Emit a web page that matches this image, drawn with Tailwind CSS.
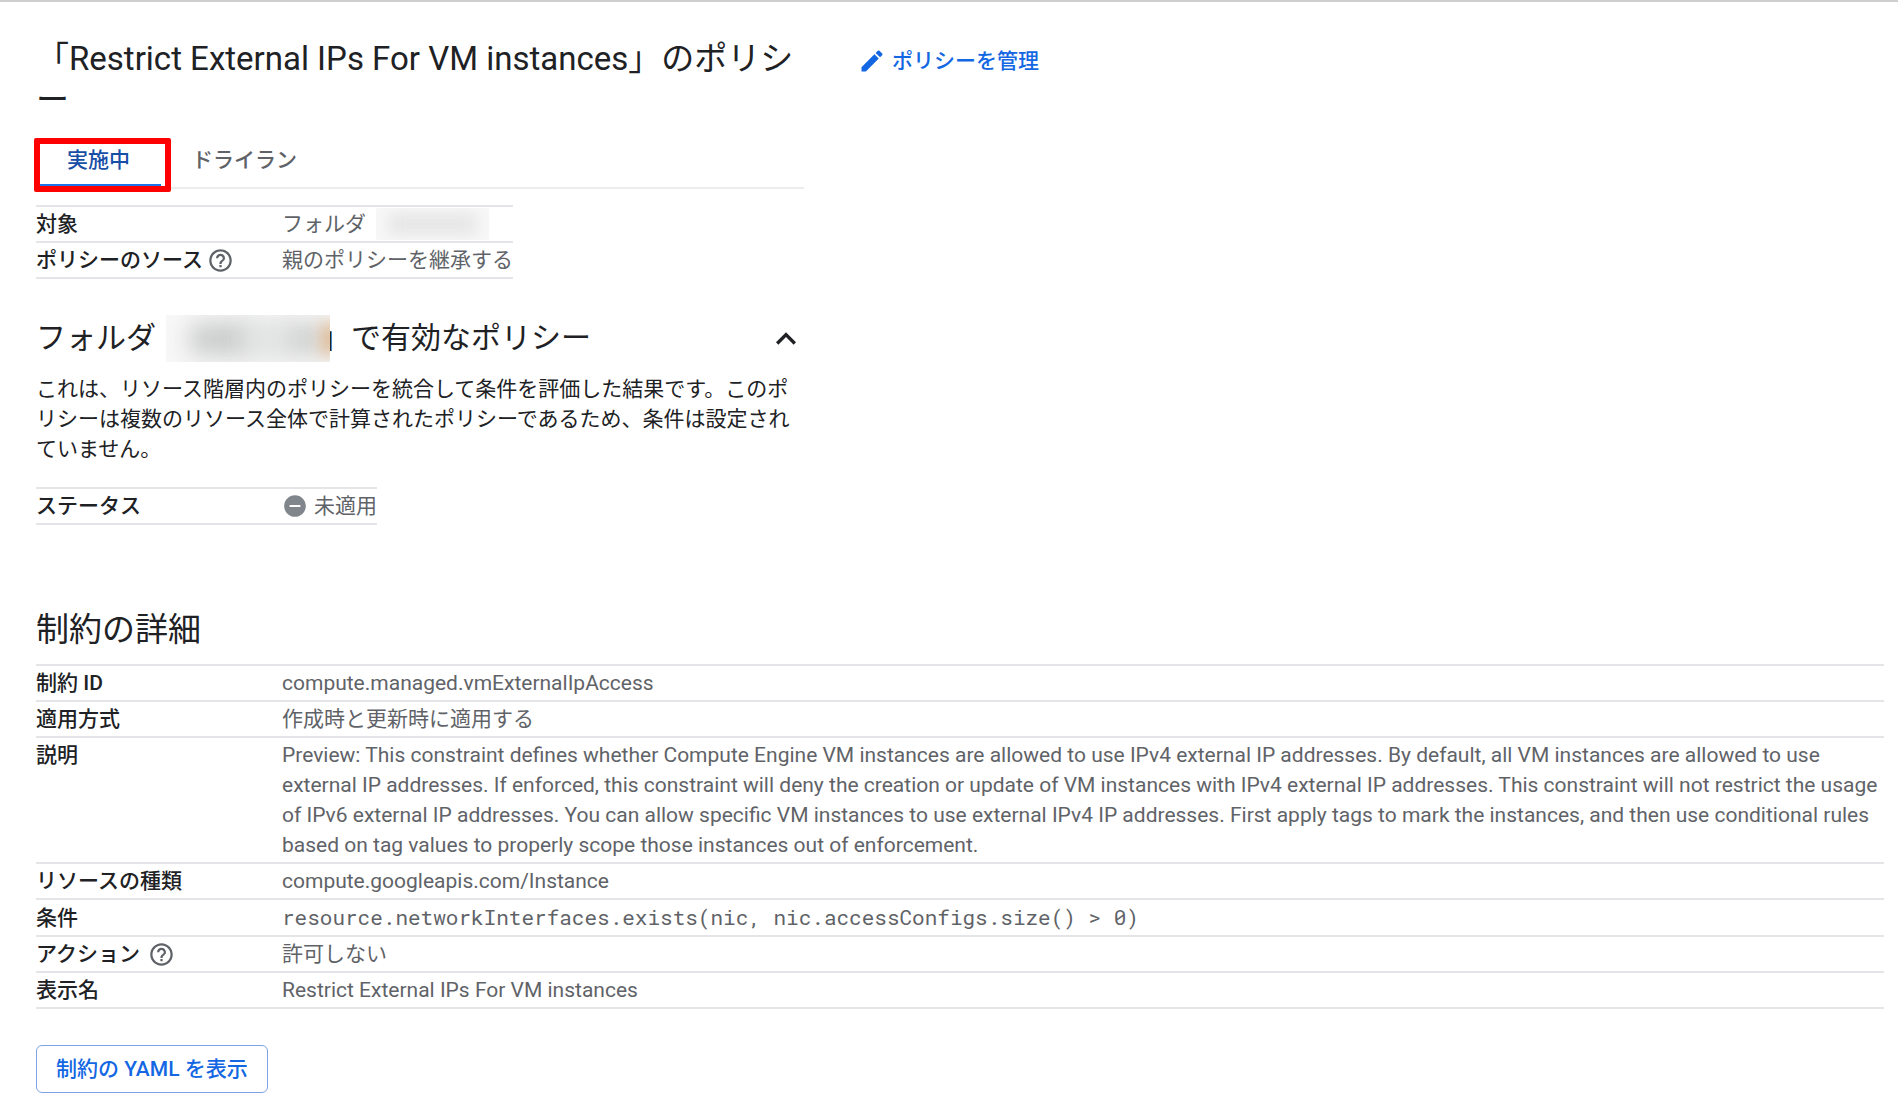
<!DOCTYPE html>
<html lang="ja">
<head>
    <meta charset="UTF-8">
    <title>Restrict External IPs For VM instances - ポリシー</title>
    <script src="https://cdn.jsdelivr.net/npm/@tailwindcss/browser@4"></script>
</head>
<body class="bg-white font-[Roboto,'Noto_Sans_CJK_JP',sans-serif] text-[21px] leading-[30px] text-[#202124]">
<main class="border-t-2 border-[#cfcfcf] pt-9 pl-9 pr-3.5 pb-4">

    <!-- Policy -->
    <div class="flex items-start gap-[54px]">
        <section class="w-[768px]">
            <h1 class="text-[33px] leading-[41px]">「Restrict External IPs For VM instances」のポリシー</h1>

            <!-- Tabs -->
            <div class="mt-[18px] flex border-b-2 border-[#ececec] font-medium" role="tablist">
                <div class="relative">
                    <button type="button" role="tab" aria-selected="true" class="h-[49px] border-b-3 border-[#1a73e8] px-[31px] pb-0.5 text-[#174ea6]">実施中</button>
                    <div class="pointer-events-none absolute -left-0.5 top-0 -right-2.5 -bottom-[5px] rounded-xs border-6 border-[#ff0000]"></div>
                </div>
                <button type="button" role="tab" aria-selected="false" class="h-[49px] border-b-3 border-transparent px-[31px] pb-0.5 text-[#5f6368]">ドライラン</button>
            </div>

            <table class="mt-4 border-collapse text-left">
                <tr class="border-y-2 border-[#e4e5e9]">
                    <th class="w-[246px] py-0.5 font-medium">対象</th>
                    <td class="py-0.5 text-[#5f6368]">
                        <div class="flex items-center">
                            フォルダ
                            <!-- Hidden folder name -->
                            <span class="relative ml-2.5 h-8 -my-px w-[113px] overflow-hidden bg-[#f8f8f8]">
                                <span class="absolute inset-x-3 inset-y-1.5 bg-[#e4e4e4] blur-sm"></span>
                            </span>
                        </div>
                    </td>
                </tr>
                <tr class="border-y-2 border-[#e4e5e9]">
                    <th class="w-[246px] py-0.5 font-medium">
                        <div class="flex items-center gap-1">
                            ポリシーのソース
                            <svg class="size-[27px] fill-[#5f6368]" viewBox="0 0 24 24"><path d="M11 18h2v-2h-2v2zm1-16C6.48 2 2 6.48 2 12s4.48 10 10 10 10-4.48 10-10S17.52 2 12 2zm0 18c-4.41 0-8-3.59-8-8s3.59-8 8-8 8 3.59 8 8-3.59 8-8 8zm0-14c-2.21 0-4 1.79-4 4h2c0-1.1.9-2 2-2s2 .9 2 2c0 2-3 1.75-3 5h2c0-2.25 3-2.5 3-5 0-2.21-1.79-4-4-4z"/></svg>
                        </div>
                    </th>
                    <td class="py-0.5 text-[#5f6368]">親のポリシーを継承する</td>
                </tr>
            </table>

            <!-- Effective policy -->
            <div class="mt-[35px] flex items-center justify-between">
                <h2 class="flex items-center text-[30px] leading-[48px]">
                    フォルダ
                    <span class="relative ml-2.5 -mr-[9px] h-[47px] w-[164px] overflow-hidden bg-[#f8f8f8]">
                        <span class="absolute left-6 top-2 h-8 w-16 bg-[#c8cac9] blur-md"></span>
                        <span class="absolute left-28 top-2 h-8 w-12 bg-[#cfd1d0] blur-md"></span>
                        <span class="absolute left-20 top-2 h-8 w-10 bg-[#e0e1e1] blur-md"></span>
                        <span class="absolute -right-2 top-2 h-8 w-4 bg-[#dcb48a] blur-sm"></span>
                    </span>
                    」で有効なポリシー
                </h2>
                <button type="button" aria-label="折りたたむ" class="-mr-0.5 pt-0.5">
                    <svg class="size-10 fill-[#202124]" viewBox="0 0 24 24"><path d="M12 8l-6 6 1.41 1.41L12 10.83l4.59 4.58L18 14z"/></svg>
                </button>
            </div>
            <p class="mt-3">これは、リソース階層内のポリシーを統合して条件を評価した結果です。このポリシーは複数のリソース全体で計算されたポリシーであるため、条件は設定されていません。</p>

            <table class="mt-[23px] border-collapse text-left">
                <tr class="border-y-2 border-[#e4e5e9]">
                    <th class="w-[246px] py-0.5 font-medium">ステータス</th>
                    <td class="py-0.5 text-[#5f6368]">
                        <div class="flex items-center gap-1.5">
                            <svg class="size-[26px] fill-[#80868b]" viewBox="0 0 24 24"><path d="M12 2C6.48 2 2 6.48 2 12s4.48 10 10 10 10-4.48 10-10S17.52 2 12 2zm5 11H7v-2h10v2z"/></svg>
                            未適用
                        </div>
                    </td>
                </tr>
            </table>
        </section>

        <a href="#" class="mt-2 flex items-center gap-1.5 font-medium text-[#1367e3]">
            <svg class="size-7 fill-[#1367e3]" viewBox="0 0 24 24"><path d="M3 17.25V21h3.75L17.81 9.94l-3.75-3.75L3 17.25zM20.71 7.04a1 1 0 0 0 0-1.41l-2.34-2.34a1 1 0 0 0-1.41 0l-1.83 1.83 3.75 3.75 1.83-1.83z"/></svg>
            ポリシーを管理
        </a>
    </div>

    <!-- Constraint details -->
    <section class="mt-[81px]">
        <h2 class="text-[33px] leading-[48px]">制約の詳細</h2>
        <table class="mt-2.5 w-full border-collapse text-left align-top">
            <tr class="border-y-2 border-[#e4e5e9]">
                <th class="w-[246px] py-0.5 font-medium">制約 ID</th>
                <td class="py-0.5 text-[#5f6368]">compute.managed.vmExternalIpAccess</td>
            </tr>
            <tr class="border-y-2 border-[#e4e5e9]">
                <th class="py-0.5 font-medium">適用方式</th>
                <td class="py-0.5 text-[#5f6368]">作成時と更新時に適用する</td>
            </tr>
            <tr class="border-y-2 border-[#e4e5e9]">
                <th class="py-0.5 align-top font-medium">説明</th>
                <td class="py-0.5 text-[#5f6368]">Preview: This constraint defines whether Compute Engine VM instances are allowed to use IPv4 external IP addresses. By default, all VM instances are allowed to use external IP addresses. If enforced, this constraint will deny the creation or update of VM instances with IPv4 external IP addresses. This constraint will not restrict the usage of IPv6 external IP addresses. You can allow specific VM instances to use external IPv4 IP addresses. First apply tags to mark the instances, and then use conditional rules based on tag values to properly scope those instances out of enforcement.</td>
            </tr>
            <tr class="border-y-2 border-[#e4e5e9]">
                <th class="py-0.5 font-medium">リソースの種類</th>
                <td class="py-0.5 text-[#5f6368]">compute.googleapis.com/Instance</td>
            </tr>
            <tr class="border-y-2 border-[#e4e5e9]">
                <th class="py-0.5 font-medium">条件</th>
                <td class="py-0.5 text-[#5f6368]"><code class="font-['Roboto_Mono','Liberation_Mono',monospace] text-[21px]">resource.networkInterfaces.exists(nic, nic.accessConfigs.size() &gt; 0)</code></td>
            </tr>
            <tr class="border-y-2 border-[#e4e5e9]">
                <th class="py-0.5 font-medium">
                    <div class="flex items-center gap-2">
                        アクション
                        <svg class="size-[27px] fill-[#5f6368]" viewBox="0 0 24 24"><path d="M11 18h2v-2h-2v2zm1-16C6.48 2 2 6.48 2 12s4.48 10 10 10 10-4.48 10-10S17.52 2 12 2zm0 18c-4.41 0-8-3.59-8-8s3.59-8 8-8 8 3.59 8 8-3.59 8-8 8zm0-14c-2.21 0-4 1.79-4 4h2c0-1.1.9-2 2-2s2 .9 2 2c0 2-3 1.75-3 5h2c0-2.25 3-2.5 3-5 0-2.21-1.79-4-4-4z"/></svg>
                    </div>
                </th>
                <td class="py-0.5 text-[#5f6368]">許可しない</td>
            </tr>
            <tr class="border-y-2 border-[#e4e5e9]">
                <th class="py-0.5 font-medium">表示名</th>
                <td class="py-0.5 text-[#5f6368]">Restrict External IPs For VM instances</td>
            </tr>
        </table>
        <button type="button" class="mt-9 h-12 rounded-md border border-[#7ba3e6] px-[19px] font-medium text-[#1367e3]">制約の YAML を表示</button>
    </section>
</main>
</body>
</html>
